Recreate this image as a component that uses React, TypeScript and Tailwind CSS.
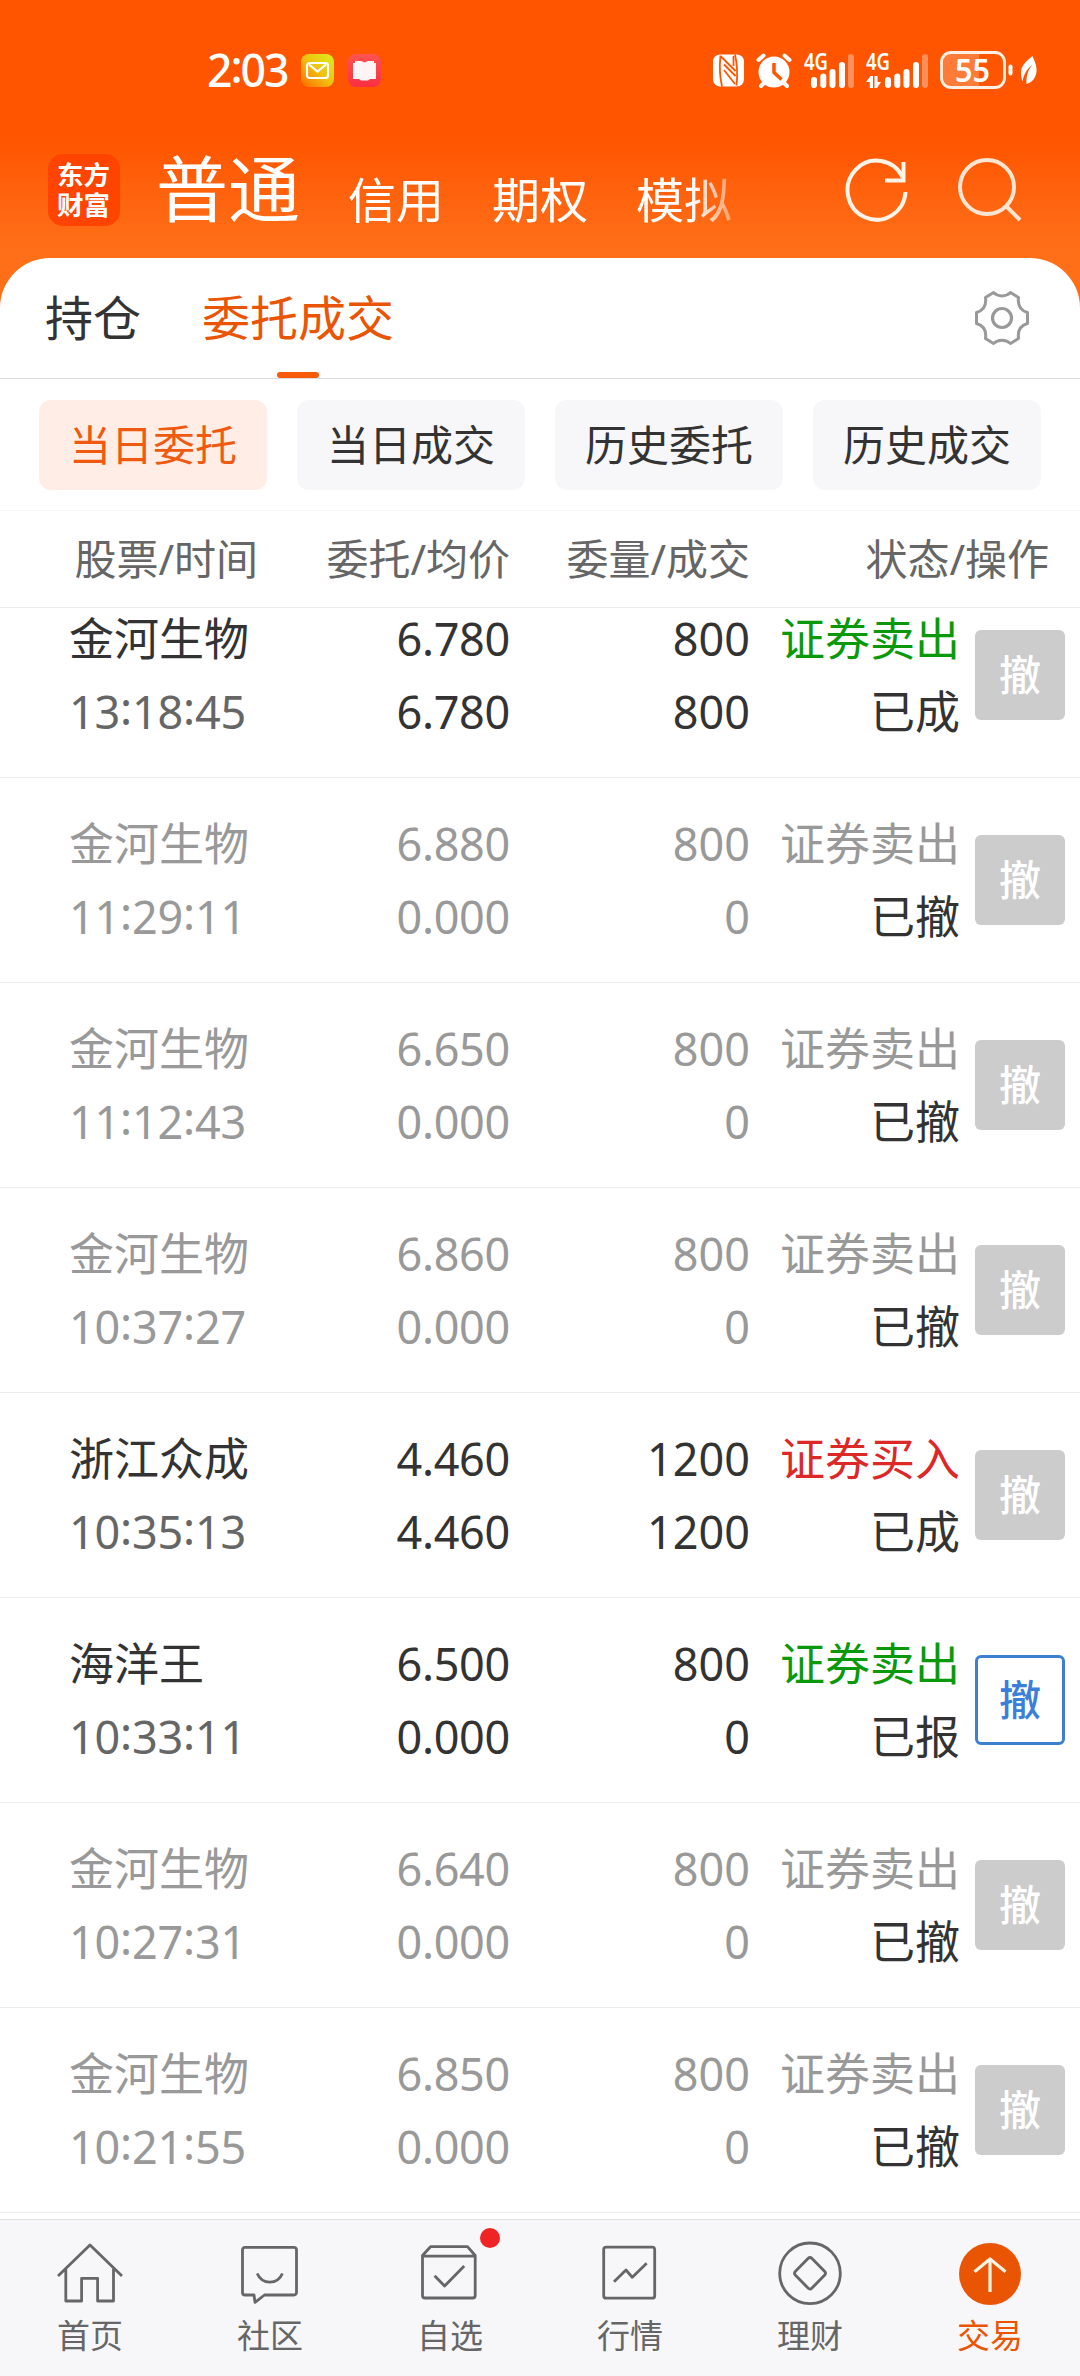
import React from 'react';

type Order = {
  name: string;
  time: string;
  price: string;
  avg: string;
  qty: string;
  done: string;
  side: 'sell' | 'buy';
  status: string;
};

const orders: Order[] = [
  { name: '金河生物', time: '13:18:45', price: '6.780', avg: '6.780', qty: '800', done: '800', side: 'sell', status: '已成' },
  { name: '金河生物', time: '11:29:11', price: '6.880', avg: '0.000', qty: '800', done: '0', side: 'sell', status: '已撤' },
  { name: '金河生物', time: '11:12:43', price: '6.650', avg: '0.000', qty: '800', done: '0', side: 'sell', status: '已撤' },
  { name: '金河生物', time: '10:37:27', price: '6.860', avg: '0.000', qty: '800', done: '0', side: 'sell', status: '已撤' },
  { name: '浙江众成', time: '10:35:13', price: '4.460', avg: '4.460', qty: '1200', done: '1200', side: 'buy', status: '已成' },
  { name: '海洋王', time: '10:33:11', price: '6.500', avg: '0.000', qty: '800', done: '0', side: 'sell', status: '已报' },
  { name: '金河生物', time: '10:27:31', price: '6.640', avg: '0.000', qty: '800', done: '0', side: 'sell', status: '已撤' },
  { name: '金河生物', time: '10:21:55', price: '6.850', avg: '0.000', qty: '800', done: '0', side: 'sell', status: '已撤' },
];

const filters = ['当日委托', '当日成交', '历史委托', '历史成交'];

// Colons sit on the middle of the digits, not on the baseline
function Clock({ value }: { value: string }) {
  return (
    <>
      {value.split(':').map((part, i) => (
        <React.Fragment key={i}>
          {i > 0 && <span className="relative -top-[4px]">:</span>}
          {part}
        </React.Fragment>
      ))}
    </>
  );
}

function Signal({ data }: { data?: boolean }) {
  const x = data ? 22 : 10;
  return (
    <svg width={data ? 63 : 51} height="52" viewBox={data ? '0 -8 63 52' : '0 -8 51 52'} fill="#fff">
      <text x="0" y="18" fontSize="24" fontWeight="600" textLength="24" lengthAdjust="spacingAndGlyphs">4G</text>
      <rect x={x - 3} y="25" width="6" height="11" rx="3" />
      <rect x={x + 6.3} y="21.5" width="6" height="14.5" rx="3" />
      <rect x={x + 15.5} y="17" width="6" height="19" rx="3" />
      <rect x={x + 25} y="10" width="6" height="26" rx="3" />
      <rect x={x + 34} y="2" width="6" height="34" rx="3" opacity="0.35" />
      {data && <path d="M0 30l4.500-6H7v12H3.800v-6zM15 30l-4 6H8.500V24h3v6z" />}
    </svg>
  );
}

function StatusBar() {
  return (
    <div className="flex h-[140px] items-center pl-[207px] pr-[43px] text-white">
      <span className="w-[94px] whitespace-nowrap text-[44.500px] leading-none font-medium tracking-[-2px]"><Clock value="2:03" /></span>
      <svg width="33" height="33" viewBox="0 0 33 33">
        <defs>
          <linearGradient id="mail" x1="0" y1="1" x2="1" y2="0">
            <stop offset="0" stopColor="#ff6a00" />
            <stop offset="0.5" stopColor="#f0c010" />
            <stop offset="1" stopColor="#d8f01c" />
          </linearGradient>
        </defs>
        <rect width="33" height="33" rx="8" fill="url(#mail)" />
        <rect x="6" y="9" width="21" height="15" rx="2.5" fill="none" stroke="#fff" strokeWidth="2.2" />
        <path d="M8 10.5l8.500 7 8.500-7" fill="none" stroke="#fff" strokeWidth="2.2" />
      </svg>
      <svg className="ml-[14px]" width="33" height="33" viewBox="0 0 33 33">
        <defs>
          <linearGradient id="book" x1="0" y1="0" x2="0" y2="1">
            <stop offset="0" stopColor="#ff5452" />
            <stop offset="1" stopColor="#f92f42" />
          </linearGradient>
        </defs>
        <rect width="33" height="33" rx="8" fill="url(#book)" />
        <path d="M5 9h2V7h6l3.500 1.500L20 7h6v2h2v16h-6l-2 1.500h-7L11 25H5z" fill="#fff5f5" />
      </svg>

      <div className="ml-auto flex items-center">
        <svg width="31" height="33" viewBox="0 0 31 33">
          <rect y="0.500" width="31" height="32" rx="7" fill="#fff" />
          <path d="M7.500 1.500c-1 9-1 20 1.500 31M23.500 31.500c1-9 1-20-1.500-31" fill="none" stroke="#ff5500" strokeWidth="1.800" />
          <path d="M8 2.500L22.500 17M11 10.500L22.500 22M11 16l11 14M20.500 2v10" fill="none" stroke="#ff5500" strokeWidth="1.800" />
        </svg>
        <svg className="ml-[12px]" width="36" height="35" viewBox="0 0 36 35">
          <circle cx="18" cy="19" r="15.500" fill="#fff" />
          <path d="M2.500 7l5-4.500M33.500 7l-5-4.500M5 33l4-4M31 33l-4-4" stroke="#fff" strokeWidth="4" strokeLinecap="round" />
          <path d="M18 10v9.500l7.500 7" fill="none" stroke="#ff5500" strokeWidth="3.500" />
        </svg>
        <div className="ml-[12px] flex gap-[11px]">
          <Signal />
          <Signal data />
        </div>
        <svg className="ml-[11px]" width="74" height="46" viewBox="0 -4 74 46">
          <path d="M12 1.500h27v35H12a10 10 0 0 1-10-10v-15a10 10 0 0 1 10-10z" fill="#ff7b38" />
          <rect x="1.500" y="1.500" width="63" height="35" rx="9.500" fill="none" stroke="#fff0e4" strokeWidth="2.800" />
          <rect x="68.500" y="13.500" width="4" height="11" rx="2" fill="#fff" />
          <text x="15" y="31" fontSize="33" fontWeight="600" fill="#fff" textLength="35" lengthAdjust="spacingAndGlyphs">55</text>
        </svg>
        <svg className="ml-[6px]" width="17" height="30" viewBox="0 0 17 30">
          <path d="M12.500 1C5 7 1 11 1 18c0 3 .5 6 1.500 8.500C4 19 7 14 12 10 7.500 16 6 22 6.500 29 14 27 17 20 16.500 13.500 16.200 9 14 5 12.500 1z" fill="#fff" />
        </svg>
      </div>
    </div>
  );
}

function TopBar() {
  return (
    <div className="flex h-[118px] pl-[48px] pr-[57px] text-white">
      <div className="mt-[14px] flex size-[72px] items-center justify-center rounded-[15px] bg-[#ff4400]">
        <span className="w-[54px] text-[26.500px] leading-[30px] font-bold break-all">东方财富</span>
      </div>
      <div className="ml-[36px] flex h-[94px] items-baseline gap-[48px] text-[48px] [mask-image:linear-gradient(to_right,#000_535px,transparent_600px)]">
        <span className="text-[72px] leading-[96px]">普通</span>
        <span className="relative top-[2px]">信用</span>
        <span className="relative top-[2px]">期权</span>
        <span className="relative top-[2px]">模拟</span>
      </div>
      <svg className="mt-[18px] ml-auto" width="66" height="66" viewBox="0 0 66 66" fill="none" stroke="#fff4e8" strokeWidth="4">
        <path d="M62.500 34A29 29.500 0 1 1 59.500 19" />
        <path d="M60.500 4v20.500M42 22.500h20.500" />
      </svg>
      <svg className="ml-[48px]" width="66" height="92" viewBox="0 0 66 92" fill="none" stroke="#ffe6d4" strokeWidth="4">
        <circle cx="30" cy="47" r="27" />
        <path d="M49 66l14 14" />
      </svg>
    </div>
  );
}

function Gear() {
  return (
    <svg width="56" height="56" viewBox="0 0 56 56" fill="none" stroke="#999" strokeWidth="3" strokeLinejoin="round">
      <path d="M19.500 2.500C24 7 32 7 36.500 2.500L44.500 7.500C43.500 15 46.500 20.500 53.500 22.500V33.500C46.500 35.500 43.500 41 44.500 48.500L36.500 53.500C32 49 24 49 19.500 53.500L11.500 48.500C12.500 41 9.500 35.500 2.500 33.500V22.500C9.500 20.500 12.500 15 11.500 7.500Z" />
      <circle cx="28" cy="28" r="9.500" strokeWidth="3.200" />
    </svg>
  );
}

function OrderRow({ order }: { order: Order }) {
  const cancelled = order.status === '已撤';
  const main = cancelled ? 'text-[#999]' : 'text-[#333]';
  const time = cancelled ? 'text-[#999]' : 'text-[#666]';
  const side = cancelled ? 'text-[#999]' : order.side === 'buy' ? 'text-[#dd2828]' : 'text-[#0a990a]';
  const button =
    order.status === '已报'
      ? 'border-[3px] border-[#3e80d0] bg-white text-[#3a7fd8]'
      : 'bg-[#ccc] text-white';

  return (
    <div className="flex h-[205px] shrink-0 border-b border-[#ececec] pl-[69px] pt-[29px] text-[45px] leading-[73px]">
      <div className="w-[180px] whitespace-nowrap">
        <div className={main}>{order.name}</div>
        <div className={`tracking-[-0.2px] ${time}`}><Clock value={order.time} /></div>
      </div>
      <div className={`w-[261px] text-right tracking-[-0.300px] ${main}`}>
        <div>{order.price}</div>
        <div>{order.avg}</div>
      </div>
      <div className={`w-[240px] text-right ${main}`}>
        <div>{order.qty}</div>
        <div>{order.done}</div>
      </div>
      <div className="w-[210px] text-right">
        <div className={side}>{order.side === 'buy' ? '证券买入' : '证券卖出'}</div>
        <div className="text-[#333]">{order.status}</div>
      </div>
      <button className={`mt-[28px] ml-[15px] flex size-[90px] items-center justify-center rounded-[6px] text-[42px] leading-none font-medium ${button}`}>
        撤
      </button>
    </div>
  );
}

const navItems = [
  {
    label: '首页',
    icon: <path d="M1 36L33 5l32 31M8.800 29v32h15.800V38.300h16V61h15.900V29" />,
  },
  {
    label: '社区',
    icon: (
      <>
        <path d="M8 7.300h49a2.500 2.500 0 0 1 2.500 2.500v42.700A2.500 2.500 0 0 1 57 55H27.500L18 62.300 17 55H8a2.500 2.500 0 0 1-2.500-2.500V9.800A2.500 2.500 0 0 1 8 7.300z" />
        <path d="M20.200 33.500c5 11.500 20.300 11.500 25.200 0" />
      </>
    ),
  },
  {
    label: '自选',
    dot: true,
    icon: (
      <>
        <path d="M5.500 15.500l8-8.800h37l7.700 8.800V55.500a2.500 2.500 0 0 1-2.500 2.500H8a2.500 2.500 0 0 1-2.500-2.500zM5.500 16.200h52.700" />
        <path d="M17.600 35.700L27.600 46l19.600-20" />
      </>
    ),
  },
  {
    label: '行情',
    icon: (
      <>
        <rect x="6.700" y="7.200" width="51" height="51" rx="2.500" />
        <path d="M17 41.700L29 30l6.300 7.300 14.400-14" />
      </>
    ),
  },
  {
    label: '理财',
    icon: (
      <>
        <circle cx="33" cy="33.300" r="30.300" />
        <path d="M31 18.500q2-2 4 0L47.500 31.300q2 2 0 4L35 48.100q-2 2-4 0L18.500 35.300q-2-2 0-4z" />
      </>
    ),
  },
  {
    label: '交易',
    active: true,
    icon: (
      <>
        <circle cx="33" cy="34" r="31" fill="#ea5504" stroke="none" />
        <path d="M33 52V19M17.500 31.700L33 19l15.500 12.700" stroke="#fff4e4" strokeWidth="3.200" />
      </>
    ),
  },
];

export default function App() {
  return (
    <div className="flex h-[2376px] w-[1080px] flex-col overflow-hidden bg-[#ff6f18] font-['Noto_Sans','Noto_Sans_CJK_SC',sans-serif]">
      <header className="h-[258px] shrink-0 bg-linear-to-b from-[#ff5500] from-[140px] to-[#ff6f18] to-[250px]">
        <StatusBar />
        <TopBar />
      </header>

      <main className="flex min-h-0 flex-1 flex-col overflow-hidden rounded-t-[50px] bg-white">
        <div className="flex h-[121px] shrink-0 items-stretch border-b border-[#dcdcdc] pl-[45px] pr-[50px] text-[48px] leading-[120px]">
          <span className="text-[#333]">持仓</span>
          <div className="relative ml-[61px] text-[#ea5504]">
            委托成交
            <span className="absolute bottom-0 left-1/2 h-[6px] w-[42px] -translate-x-1/2 rounded-full bg-[#f95a08]" />
          </div>
          <div className="ml-auto flex items-center"><Gear /></div>
        </div>

        <div className="flex h-[132px] shrink-0 gap-[30px] border-b border-[#f6f6f6] px-[39px] pt-[21px]">
          {filters.map((label, i) => (
            <button
              key={label}
              className={`h-[90px] w-[228px] rounded-[12px] text-[42px] leading-[90px] ${i === 0 ? 'bg-[#ffede6] text-[#f05a10]' : 'bg-[#f7f7fa] text-[#333]'}`}
            >
              {label}
            </button>
          ))}
        </div>

        <div className="flex h-[97px] shrink-0 border-b border-[#ececec] text-right text-[42px] leading-[96px] text-[#666]">
          <span className="w-[258px]">股票/时间</span>
          <span className="w-[252px]">委托/均价</span>
          <span className="w-[240px]">委量/成交</span>
          <span className="w-[299px]">状态/操作</span>
        </div>

        {/* list is scrolled a little, the first row is partly under the header */}
        <div className="flex min-h-0 flex-1 flex-col overflow-hidden">
          <div className="-mt-[35px]">
            {orders.map((order) => (
              <OrderRow key={order.time} order={order} />
            ))}
          </div>
        </div>
      </main>

      <nav className="grid h-[157px] shrink-0 grid-cols-6 border-t border-[#dfdfdf] bg-[#f7f7fa]">
        {navItems.map((item) => (
          <div key={item.label} className={`flex flex-col items-center pt-[20px] ${item.active ? 'text-[#ea5504]' : 'text-[#666]'}`}>
            <div className="relative">
              <svg width="66" height="66" viewBox="0 0 66 66" fill="none" stroke="currentColor" strokeWidth="2.800" strokeLinejoin="round">
                {item.icon}
              </svg>
              {item.dot && <span className="absolute -top-[12px] left-[63px] size-[20px] rounded-full bg-[#f02424]" />}
            </div>
            <span className="mt-[10px] text-[33px] leading-[40px]">{item.label}</span>
          </div>
        ))}
      </nav>
    </div>
  );
}
